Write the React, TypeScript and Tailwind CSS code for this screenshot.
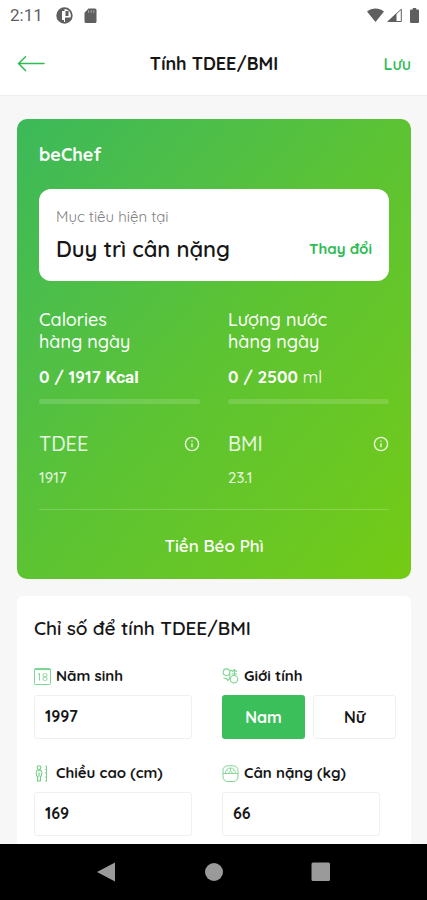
import React, {useState} from "react";

type StatProps = {
    title: string;
    children: React.ReactNode;
};

type IndexProps = {
    name: string;
    value: string;
};

type FieldProps = {
    id: string;
    label: string;
    icon: React.ReactNode;
    value: string;
    onChange: (value: string) => void;
};

const CalendarIcon = () => (
    <svg className="w-[17px] h-[17px] shrink-0" viewBox="0 0 17 17" fill="none" stroke="#7fd492" strokeWidth="1">
        <rect x="0.5" y="0.5" width="16" height="16" rx="1" />
        <path d="M0.5 1.5h16" strokeWidth="1.2" />
        <path d="M4 6.5l1.5-1v7M10.5 5.5h1a1.5 1.7 0 010 3.4h-1a1.5 1.7 0 010-3.4zM10.5 8.9h1a1.5 1.8 0 010 3.6h-1a1.5 1.8 0 010-3.6z" strokeWidth="0.9" />
    </svg>
);

const GenderIcon = () => (
    <svg className="w-[17px] h-[17px] shrink-0" viewBox="0 0 17 17" fill="none" stroke="#7fd492" strokeWidth="1.1">
        <circle cx="4.5" cy="4.2" r="3.3" />
        <path d="M7.5 5.5c1 2.500.5 5-2 7.500M1.500 10.500c1.500-.5 3 0 4.500 1.500M7.800 3c1.200-.8 2-.8 2.700 0" />
        <circle cx="12" cy="11.2" r="3.700" />
        <path d="M12.500 7.500V1.500M10.200 3.800l2.300-2.300 2.300 2.300M9.500 6h5.500" />
    </svg>
);

const HeightIcon = () => (
    <svg className="w-[17px] h-[17px] shrink-0" viewBox="0 0 17 17" fill="none" stroke="#6ccd82" strokeWidth="1.1">
        <circle cx="5" cy="2.6" r="1.9" />
        <path d="M3.4 5.3h3.2c1.2.8 1.6 3.4.6 5.6l-.8.6v4.5H3.6v-4.5l-.8-.6c-1-2.2-.6-4.8.6-5.6zM5 7.5v4" />
        <path d="M12.5 1v15.5M11.2 1h1.3M11.2 4.5h1.3M11.2 8h1.3M11.2 12h1.3M11.2 16h1.3" strokeWidth="0.9" />
    </svg>
);

const ScaleIcon = () => (
    <svg className="w-[17px] h-[17px] shrink-0" viewBox="0 0 17 17" fill="none" stroke="#7fd492" strokeWidth="1">
        <rect x="1" y="0.8" width="15" height="15.7" rx="4.5" />
        <path d="M1 8.5h15M3.5 8.2c0-3 2-5.2 5-5.2s5 2.2 5 5.2M6.5 8.3l2-3 2 3M8.5 3v2M5.2 5l.8.8M11.8 5l-.8.8" strokeWidth="0.9" />
    </svg>
);

const InfoIcon = () => (
    <svg className="w-4 h-4" viewBox="0 0 16 16" fill="none" stroke="currentColor" strokeWidth="1.4">
        <circle cx="8" cy="8" r="6.6" />
        <path d="M8 7.2v4M8 4.4v1.4" />
    </svg>
);

const StatusBar = () => (
    <div className="flex h-[30px] items-center justify-between pl-[10px] pr-2 text-[#5f5f5f]">
        <div className="flex items-center">
            <span className="font-[Roboto,sans-serif] text-[17px] leading-5">2:11</span>
            <svg className="ml-[13px] w-[17px] h-[17px]" viewBox="0 0 17 17">
                <circle cx="8.5" cy="8.5" r="7.3" fill="none" stroke="currentColor" strokeWidth="1.8" />
                <path d="M1.5 8.5a7 7 0 017-7V4H6v9h2v2.5a7 7 0 01-6.5-7z" fill="currentColor" />
                <path d="M9.5 4h3v5h-3zM9 10.5h6l-2 3.5-4 1.5z" fill="currentColor" />
            </svg>
            <svg className="ml-[11px] w-[13px] h-[15px]" viewBox="0 0 13 15">
                <path d="M4.5 0.5H11a1.5 1.5 0 011.5 1.5v11.5A1.5 1.5 0 0111 15H2a1.5 1.5 0 01-1.5-1.5V4.8z" fill="currentColor" />
                <path d="M4.6 2.2v2.6M7.2 2.2v2.6M9.8 2.2v2.6" stroke="#a8a8a8" strokeWidth="1" />
            </svg>
        </div>
        <div className="flex items-center">
            <svg className="w-[17px] h-[14px]" viewBox="0 0 17 14">
                <path d="M0 3.4C4.8-.6 12.2-.6 17 3.4L8.5 14z" fill="currentColor" />
            </svg>
            <svg className="ml-[3px] w-[15px] h-[14px]" viewBox="0 0 15 14">
                <path d="M1.2 13.5L14.3 1.2v12.3z" fill="none" stroke="currentColor" strokeWidth="1" />
                <path d="M0 14L9.5 5v9z" fill="currentColor" />
            </svg>
            <svg className="ml-2 w-[9px] h-[15px]" viewBox="0 0 9 15">
                <path d="M2.8 0h3.4v1.6H8a1 1 0 011 1V14a1 1 0 01-1 1H1a1 1 0 01-1-1V2.6a1 1 0 011-1h1.8z" fill="currentColor" />
            </svg>
        </div>
    </div>
);

const Stat = ({title, children}: StatProps) => (
    <div>
        <h3 className="text-[18px] leading-[22px] font-medium">
            {title}
            <br />
            hàng ngày
        </h3>
        <p className="mt-3 text-[17px] leading-6 font-bold">{children}</p>
        <div className="mt-[10px] h-[5px] rounded-sm bg-white/15" />
    </div>
);

const BodyIndex = ({name, value}: IndexProps) => (
    <div className="text-white/85">
        <div className="flex items-center justify-between">
            <h3 className="text-[20px] leading-7 font-medium">{name}</h3>
            <button type="button" aria-label={name}>
                <InfoIcon />
            </button>
        </div>
        <p className="mt-[10px] text-[15px] leading-5 font-medium">{value}</p>
    </div>
);

const Field = ({id, label, icon, value, onChange}: FieldProps) => (
    <div>
        <label htmlFor={id} className="flex items-center gap-[5px] text-[15px] leading-5 font-bold">
            {icon}
            {label}
        </label>
        <div className="mt-[9px] pr-4">
            <input
                id={id}
                type="text"
                inputMode="numeric"
                value={value}
                onChange={(e) => onChange(e.target.value)}
                className="h-11 w-full rounded-[3px] border border-[#f0f0f0] bg-white px-[10px] pb-[2px] text-[16px] font-bold outline-none"
            />
        </div>
    </div>
);

const App = () => {
    const [year, setYear] = useState("1997");
    const [height, setHeight] = useState("169");
    const [weight, setWeight] = useState("66");
    const [gender, setGender] = useState("Nam");

    return (
        <div className="flex min-h-screen flex-col bg-[#f7f7f7] font-[Quicksand,Lato,sans-serif] text-[#161616]">
            <header className="border-b border-[#ededed] bg-white">
                <StatusBar />
                <div className="grid h-[65px] grid-cols-[1fr_auto_1fr] items-center pl-[17px] pr-4 pt-[2px]">
                    <button type="button" aria-label="Quay lại" className="justify-self-start">
                        <svg className="w-7 h-4" viewBox="0 0 28 16" fill="none" stroke="#2dbb54" strokeWidth="1.5" strokeLinecap="round" strokeLinejoin="round">
                            <path d="M27 7.5H1.5M8.5 0.8L1.5 7.5l7 7" />
                        </svg>
                    </button>
                    <h1 className="text-[18px] leading-6 font-bold">Tính TDEE/BMI</h1>
                    <button type="button" className="justify-self-end text-[16px] leading-6 font-semibold text-[#2dbb54]">
                        Lưu
                    </button>
                </div>
            </header>

            <main className="flex flex-1 flex-col pl-[17px] pr-4 pt-[23px]">
                <section className="rounded-[10px] bg-linear-to-br from-[#3bb959] via-[#5cc332] to-[#74cb12] px-[22px] pt-6 pb-[21px] text-white">
                    <h2 className="text-[18px] leading-6 font-bold">beChef</h2>

                    <div className="mt-[22px] rounded-xl bg-white px-[17px] py-4">
                        <p className="text-[15px] leading-6 text-[#808080]">Mục tiêu hiện tại</p>
                        <div className="mt-1 flex items-center justify-between">
                            <p className="text-[22px] leading-8 font-semibold text-[#161616]">Duy trì cân nặng</p>
                            <button type="button" className="text-[15px] leading-6 font-bold text-[#2dbb54]">
                                Thay đổi
                            </button>
                        </div>
                    </div>

                    <div className="mt-7 grid grid-cols-2 gap-7">
                        <Stat title="Calories">
                            0 / 1917 <span className="font-[Roboto,sans-serif]">Kcal</span>
                        </Stat>
                        <Stat title="Lượng nước">
                            0 / 2500 <span className="font-normal">ml</span>
                        </Stat>
                    </div>

                    <div className="mt-[26px] grid grid-cols-2 gap-7">
                        <BodyIndex name="TDEE" value="1917" />
                        <BodyIndex name="BMI" value="23.1" />
                    </div>

                    <p className="mt-[21px] border-t border-white/20 pt-6 text-center text-[17px] leading-6 font-semibold">
                        Tiền Béo Phì
                    </p>
                </section>

                <section className="mt-[17px] flex-1 rounded-t-md bg-white pl-[17px] pr-[15px] pt-5 pb-1">
                    <h2 className="text-[19px] leading-6 font-semibold">Chỉ số để tính TDEE/BMI</h2>
                    <div className="mt-[26px] grid grid-cols-2 gap-x-[14px] gap-y-6">
                        <Field id="year" label="Năm sinh" icon={<CalendarIcon />} value={year} onChange={setYear} />
                        <div role="group" aria-labelledby="gender-label">
                            <p id="gender-label" className="flex items-center gap-[5px] text-[15px] leading-5 font-bold">
                                <GenderIcon />
                                Giới tính
                            </p>
                            <div className="mt-[9px] grid grid-cols-2 gap-2">
                                {["Nam", "Nữ"].map((item) => (
                                    <button
                                        key={item}
                                        type="button"
                                        aria-pressed={gender === item}
                                        onClick={() => setGender(item)}
                                        className={
                                            gender === item
                                                ? "h-11 rounded-[3px] bg-[#3bbf5a] text-[16px] font-bold text-white"
                                                : "h-11 rounded-[3px] border border-[#f0f0f0] bg-white text-[16px] font-bold"
                                        }
                                    >
                                        {item}
                                    </button>
                                ))}
                            </div>
                        </div>
                        <Field id="height" label="Chiều cao (cm)" icon={<HeightIcon />} value={height} onChange={setHeight} />
                        <Field id="weight" label="Cân nặng (kg)" icon={<ScaleIcon />} value={weight} onChange={setWeight} />
                    </div>
                </section>
            </main>

            <nav className="flex h-14 items-center justify-center gap-[87px] bg-black text-[#9a9a9a]">
                <button type="button" aria-label="Back">
                    <svg className="w-5 h-5" viewBox="0 0 20 20" fill="currentColor">
                        <path d="M18 0.5v19L0 10z" />
                    </svg>
                </button>
                <button type="button" aria-label="Home">
                    <svg className="w-5 h-5" viewBox="0 0 20 20" fill="currentColor">
                        <circle cx="10" cy="10" r="9" />
                    </svg>
                </button>
                <button type="button" aria-label="Recents">
                    <svg className="w-5 h-5" viewBox="0 0 20 20" fill="currentColor">
                        <rect x="0.5" y="0.5" width="18.5" height="18.5" rx="1.5" />
                    </svg>
                </button>
            </nav>
        </div>
    );
};

export default App;
